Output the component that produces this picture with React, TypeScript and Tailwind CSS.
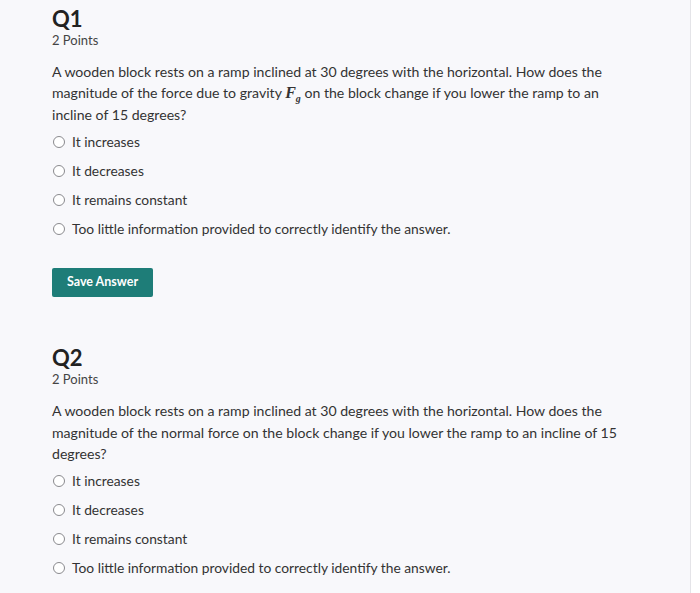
import React from 'react';

const options = [
  'It increases',
  'It decreases',
  'It remains constant',
  'Too little information provided to correctly identify the answer.',
];

function Option({ label }: { label: string }) {
  return (
    <label className="flex h-[29px] items-center gap-[7px] pl-[1px] text-[13.8px]">
      <span className="h-[12px] w-[12px] shrink-0 rounded-full border-[1.5px] border-[#8a8a8e] bg-white" />
      <span>{label}</span>
    </label>
  );
}

function Question({ num, children, button }: { num: number; children: React.ReactNode; button?: boolean }) {
  return (
    <section>
      <h2 className="text-[22px] font-bold leading-[26px] text-[#222]">Q{num}</h2>
      <div className="text-[13px] leading-[16px] text-[#444]">2 Points</div>
      <p className="mt-[13px] leading-[21.3px]">{children}</p>
      <div className="mt-[2.5px]">
        {options.map((o) => (
          <Option key={o} label={o} />
        ))}
      </div>
      {button && (
        <button className="mt-[24.5px] h-[29px] w-[101px] rounded-[2px] bg-[#1e7d78] text-[12.5px] font-bold text-white">
          Save Answer
        </button>
      )}
    </section>
  );
}

export default function App() {
  return (
    <div className="h-[593px] w-[700px] overflow-hidden bg-white font-['Lato',sans-serif] text-[14.1px] text-[#333]">
      <div className="h-full w-[691px] border-r border-[#e4e4e8] bg-[#f8f8fb] px-[52px] pt-[6px]">
        <Question num={1} button>
          A wooden block rests on a ramp inclined at 30 degrees with the horizontal. How does the magnitude of the
          force due to gravity{' '}
          <span className="inline-flex items-end font-['Liberation_Serif',serif] text-[16px] font-bold italic leading-none">
            F<span className="translate-y-[3px] text-[10px] leading-none">g</span>
          </span>{' '}
          on the block change if you lower the ramp to an incline of 15 degrees?
        </Question>
        <div className="mt-[48.5px]">
          <Question num={2}>
            A wooden block rests on a ramp inclined at 30 degrees with the horizontal. How does the magnitude of the
            normal force on the block change if you lower the ramp to an incline of 15 degrees?
          </Question>
        </div>
      </div>
    </div>
  );
}
